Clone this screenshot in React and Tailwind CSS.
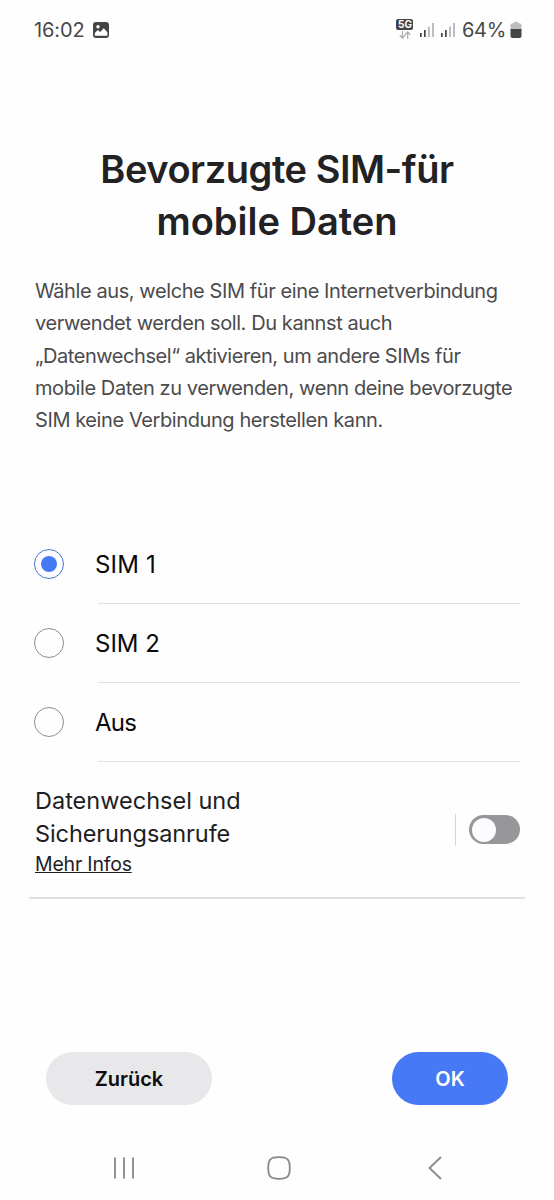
import React, { useState } from "react";

const options = [
  { name: "SIM 1", tracking: "tracking-[0.2px]" },
  { name: "SIM 2", tracking: "tracking-[0px]" },
  { name: "Aus", tracking: "tracking-[-0.8px]" },
];

function Signal() {
  return (
    <svg width="15" height="16" viewBox="0 0 15 16" className="shrink-0">
      <rect x="0" y="11" width="1.7" height="4" fill="#454547" />
      <rect x="4" y="8" width="1.7" height="7" fill="#454547" />
      <rect x="8" y="4.5" width="2" height="10.5" fill="#bdbdbf" />
      <rect x="12" y="1" width="2" height="14" fill="#bdbdbf" />
    </svg>
  );
}

function StatusBar() {
  return (
    <header className="flex h-[60px] items-center pr-[32px] pl-[34px] text-[20px] text-[#48484a]">
      <span className="-mt-px tracking-[-0.1px]">16:02</span>
      <svg width="16" height="16" viewBox="0 0 16 16" className="ml-2">
        <rect width="16" height="16" rx="3" fill="#454547" />
        <circle cx="5" cy="4.8" r="1.7" fill="#fff" />
        <path d="M1.8 13.8V11l3-3 2.4 2 3.6-3.8 3.6 4v3.6z" fill="#fff" />
      </svg>
      <div className="ml-auto flex items-center">
        <div className="-mt-[3px] flex w-[18px] flex-col items-center gap-px">
          <span className="flex h-[11px] w-[17px] items-center justify-center rounded-[2px] bg-[#454547] text-[10px] leading-none font-bold text-white">5G</span>
          <svg width="12" height="8" viewBox="0 0 12 8" fill="none" stroke="#b0b0b2" strokeWidth="1.3">
            <path d="M3.5 0v7M.8 4.3l2.7 2.7 2.7-2.7M8.7 8V1M6 3.7 8.7 1l2.7 2.7" />
          </svg>
        </div>
        <div className="ml-[6px] flex gap-[6px]">
          <Signal />
          <Signal />
        </div>
        <span className="-mt-px ml-[6px] tracking-[-0.3px]">64%</span>
        <svg width="12" height="16" viewBox="0 0 12 16" className="ml-[4px]">
          <path d="M3.5 1.2Q3.5 0 4.5 0h3q1 0 1 1.2H9.5Q11.5 1.2 11.5 3.2V8H.5V3.2Q.5 1.2 2.5 1.2z" fill="#bdbdbf" />
          <path d="M.5 7h11v7q0 2-2 2h-7q-2 0-2-2z" fill="#454547" />
        </svg>
      </div>
    </header>
  );
}

export default function App() {
  const [selected, setSelected] = useState("SIM 1");
  return (
    <div className="flex h-[1200px] w-[554px] flex-col overflow-hidden bg-[#fefefe] font-['Inter','Liberation_Sans',sans-serif] whitespace-nowrap">
      <StatusBar />
      <h1 className="mt-[83px] text-center text-[38px] leading-[52px] font-semibold text-[#222224]">
        <span className="block tracking-[-0.45px]">Bevorzugte SIM-für</span>
        <span className="block">mobile Daten</span>
      </h1>
      <p className="mt-[28px] pl-[35px] text-[20px] leading-[32.25px] tracking-[-0.41px] text-[#4b4b4d]">
        <span className="block">Wähle aus, welche SIM für eine Internetverbindung</span>
        <span className="block">verwendet werden soll. Du kannst auch</span>
        <span className="block tracking-[-0.44px]">„Datenwechsel“ aktivieren, um andere SIMs für</span>
        <span className="block">mobile Daten zu verwenden, wenn deine bevorzugte</span>
        <span className="block">SIM keine Verbindung herstellen kann.</span>
      </p>
      <div className="mt-[88px] pr-[34px] pl-[34px]">
        {options.map(({ name, tracking }) => (
          <button key={name} onClick={() => setSelected(name)} className="flex h-[79px] w-full items-center">
            {selected === name ? (
              <span className="flex size-[30px] shrink-0 items-center justify-center rounded-full border-[1.5px] border-[#4876d8]">
                <span className="size-4 rounded-full bg-[#467af5]" />
              </span>
            ) : (
              <span className="size-[30px] shrink-0 rounded-full border-[1.5px] border-[#8d8d8f]" />
            )}
            <span className="ml-[34px] flex h-full grow translate-y-px items-center border-b border-[#e0e0e2] text-[24px] text-[#0a0a0a]">
              <span className={`-ml-[3px] pt-[2px] ${tracking}`}>{name}</span>
            </span>
          </button>
        ))}
      </div>
      <section className="mx-[29px] flex h-[138px] items-center border-b-2 border-[#dfdfe1] pt-px pr-[5px] pl-[6px] text-[#1d1d1f]">
        <div className="pt-[2px]">
          <div className="text-[23.5px] leading-[33px]">
            <span className="block">Datenwechsel und</span>
            <span className="block tracking-[-0.1px]">Sicherungsanrufe</span>
          </div>
          <a className="block text-[19.5px] leading-[28px] tracking-[-0.2px] underline">Mehr Infos</a>
        </div>
        <span className="ml-auto h-8 w-[1.5px] bg-[#d6d6d8]" />
        <button className="ml-[13px] flex h-[29px] w-[51px] items-center rounded-full bg-[#97979a] pl-[3px]">
          <span className="size-6 rounded-full bg-[#fcfcff]" />
        </button>
      </section>
      <div className="mt-[153px] flex items-center justify-between pr-[46px] pl-[46px] text-[20px] font-semibold">
        <button className="h-[53px] w-[166px] rounded-full bg-[#e8e8eb] text-[#0c0c0e]">Zurück</button>
        <button className="h-[53px] w-[116px] rounded-full bg-[#4779f6] text-white">OK</button>
      </div>
      <nav className="mt-[51px] flex items-center pl-[113px]">
        <svg width="22" height="24" viewBox="0 0 22 24" stroke="#88888a" strokeWidth="1.8">
          <path d="M2 1.5v21M11 1.5v21M20 1.5v21" />
        </svg>
        <svg width="24" height="24" viewBox="0 0 24 24" fill="none" stroke="#88888a" strokeWidth="1.8" className="ml-[132px]">
          <path d="M12 1.2C20.5 1.2 22.8 3.5 22.8 12S20.5 22.8 12 22.8 1.2 20.5 1.2 12 3.5 1.2 12 1.2z" />
        </svg>
        <svg width="14" height="24" viewBox="0 0 14 24" fill="none" stroke="#88888a" strokeWidth="1.8" className="ml-[137px]">
          <path d="M13 1 1.5 12 13 23" />
        </svg>
      </nav>
    </div>
  );
}
